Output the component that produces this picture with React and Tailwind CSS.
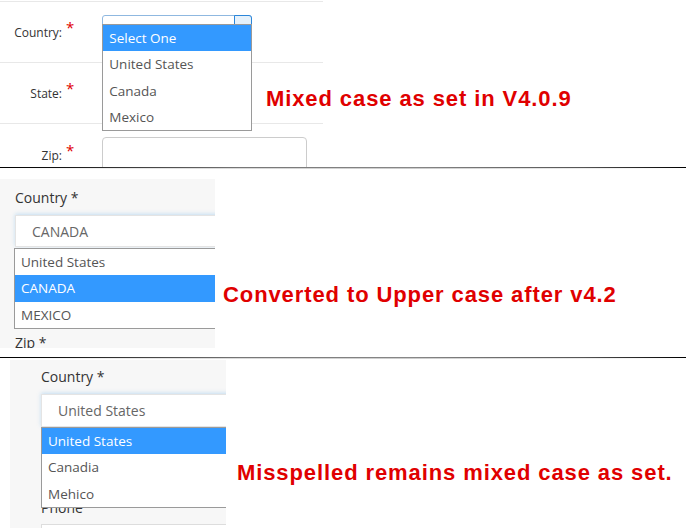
const ui = { fontFamily: '"Open Sans", "Noto Sans", Arial, sans-serif' };
const red = { fontFamily: '"Liberation Sans", Arial, sans-serif' };

function Star() {
  return <span className="text-[#e00000] text-[15px] leading-none ml-[4px] -mt-[9px]">*</span>;
}

function Row1({ label, children, last }) {
  return (
    <div className={`h-[61px] flex items-center ${last ? '' : 'border-b border-[#e8e8e8]'}`}>
      <div className="w-[62px] text-right text-[12px] text-[#333] pt-[2px]">{label}</div>
      <Star />
      <div className="ml-[28px]">{children}</div>
    </div>
  );
}

function Sep() {
  return (
    <div className="h-[2px] flex flex-col">
      <div className="h-px bg-[linear-gradient(to_right,#000_0%,#111_8%,#777_35%,#888_60%,#555_85%,#000_100%)]" />
      <div className="h-px bg-[linear-gradient(to_right,#fff_0%,#ddd_30%,#ccc_60%,#fff_100%)]" />
    </div>
  );
}

export default function App() {
  return (
    <div className="w-[686px] h-[528px] bg-white overflow-hidden" style={ui}>
      {/* Section 1 */}
      <div className="relative h-[167px] overflow-hidden">
        <div className="w-[323px] pt-px">
          <div className="h-px bg-[#e8e8e8]" />
          <Row1 label="Country:">
            <div className="relative w-[150px] h-[34px] border border-[#8fb8e0] rounded-[3px] bg-white">
              <div className="absolute right-[-1px] top-[-1px] w-[18px] h-[10px] border border-[#2b86d9] bg-[#e5f1fb] rounded-tr-[3px]" />
              <div className="absolute left-[-1px] top-[8px] w-[150px] h-[107px] border border-[#9a9a9a] bg-white flex flex-col text-[13.5px] text-[#555] z-10">
                <div className="h-[26px] bg-[#3399ff] text-white flex items-center pl-[6px]">Select One</div>
                <div className="h-[27px] flex items-center pl-[6px]">United States</div>
                <div className="h-[26px] flex items-center pl-[6px]">Canada</div>
                <div className="h-[26px] flex items-center pl-[6px]">Mexico</div>
              </div>
            </div>
          </Row1>
          <Row1 label="State:">
            <div className="w-[150px] h-[34px] border border-[#ccc] rounded-[4px] bg-white" />
          </Row1>
          <Row1 label="Zip:" last>
            <div className="w-[205px] h-[34px] border border-[#ccc] rounded-[4px] bg-white -mt-[2px]" />
          </Row1>
        </div>
        <div className="absolute left-[266px] top-[88px] text-[22px] tracking-[0.9px] font-bold text-[#e00000] leading-none whitespace-nowrap" style={red}>
          Mixed case as set in V4.0.9
        </div>
      </div>

      <Sep />

      {/* Section 2 */}
      <div className="h-[188px] flex">
        <div className="mt-[10px] w-[215px] h-[169px] bg-[#f7f7f7] overflow-hidden pl-[15px] pt-[9px]">
          <div className="text-[14px] leading-[20px] text-[#333]">Country *</div>
          <div className="relative mt-[7px] w-[230px] h-[32px] bg-white border border-[#e4e4e4] shadow-[0_-1px_4px_rgba(102,175,233,0.35)] flex items-center pl-[16px] text-[14px] text-[#666]">
            CANADA
            <div className="absolute left-[-2px] top-[32px] w-[230px] h-[81px] border border-[#9a9a9a] bg-white flex flex-col text-[13.5px] text-[#555]">
              <div className="h-[26px] flex items-center pl-[6px]">United States</div>
              <div className="h-[27px] bg-[#3399ff] text-white flex items-center pl-[6px]">CANADA</div>
              <div className="h-[26px] flex items-center pl-[6px]">MEXICO</div>
            </div>
          </div>
          <div className="mt-[86px] text-[14px] leading-[20px] text-[#333]">Zip *</div>
        </div>
        <div className="ml-[8px] mt-[115px] text-[22px] tracking-[0.9px] font-bold text-[#e00000] leading-none whitespace-nowrap" style={red}>
          Converted to Upper case after v4.2
        </div>
      </div>

      <Sep />

      {/* Section 3 */}
      <div className="h-[169px] flex">
        <div className="ml-[10px] mt-[1px] w-[216px] h-[168px] bg-[#f7f7f7] overflow-hidden pl-[31px] pt-[7px]">
          <div className="text-[14px] leading-[20px] text-[#333]">Country *</div>
          <div className="relative mt-[7px] w-[230px] h-[33px] bg-white border border-[#e4e4e4] shadow-[0_-1px_4px_rgba(102,175,233,0.35)] flex items-center pl-[16px] text-[14px] text-[#666]">
            United States
            <div className="absolute left-[-1px] top-[32px] w-[230px] h-[81px] border border-[#9a9a9a] bg-white flex flex-col text-[13.5px] text-[#555] z-10">
              <div className="h-[26px] bg-[#3399ff] text-white flex items-center pl-[6px]">United States</div>
              <div className="h-[27px] flex items-center pl-[6px]">Canadia</div>
              <div className="h-[26px] flex items-center pl-[6px]">Mehico</div>
            </div>
          </div>
          <div className="mt-[71px] text-[14px] leading-[20px] text-[#333]">Phone</div>
          <div className="mt-[6px] w-[230px] h-[34px] bg-white border border-[#ddd]" />
        </div>
        <div className="ml-[11px] mt-[103px] text-[22px] tracking-[0.9px] font-bold text-[#e00000] leading-none whitespace-nowrap" style={red}>
          Misspelled remains mixed case as set.
        </div>
      </div>
    </div>
  );
}
